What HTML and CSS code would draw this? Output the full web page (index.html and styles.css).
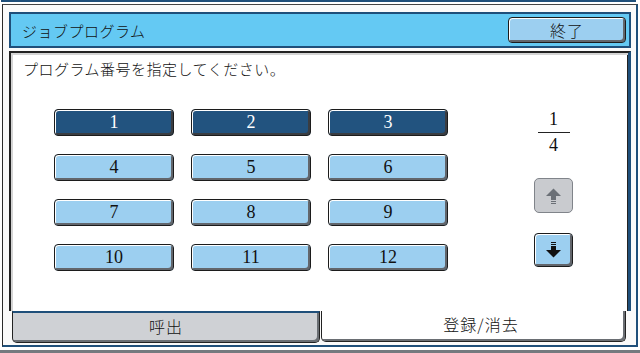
FILE: index.html
```html
<!DOCTYPE html>
<html lang="ja">
<head>
    <meta charset="UTF-8">
    <title>ジョブプログラム</title>
    <link rel="stylesheet" href="styles.css">
</head>
<body>
    <div class="topline"></div>
    <div class="frame">
        <div class="titlebar">
            <span class="title">ジョブプログラム</span>
            <button class="key exit">終了</button>
        </div>
        <div class="panel">
            <div class="panel-body">
                <p class="prompt">プログラム番号を指定してください。</p>
                <div class="picker">
                    <div class="numgrid">
                        <button class="key num sel">1</button>
                        <button class="key num sel">2</button>
                        <button class="key num sel">3</button>
                        <button class="key num">4</button>
                        <button class="key num">5</button>
                        <button class="key num">6</button>
                        <button class="key num">7</button>
                        <button class="key num">8</button>
                        <button class="key num">9</button>
                        <button class="key num">10</button>
                        <button class="key num">11</button>
                        <button class="key num">12</button>
                    </div>
                    <div class="pager">
                        <div class="frac">
                            <span>1</span>
                            <span class="bar"></span>
                            <span>4</span>
                        </div>
                        <button class="key arrow up" disabled>
                            <svg width="15" height="16" viewBox="0 0 15 16">
                                <path d="M7.5 0.5L15 8H0Z"/>
                                <rect x="5" y="8" width="5" height="4"/>
                                <rect x="5" y="13" width="5" height="1"/>
                                <rect x="5" y="15" width="5" height="1"/>
                            </svg>
                        </button>
                        <button class="key arrow down">
                            <svg width="15" height="16" viewBox="0 0 15 16">
                                <rect x="5" y="0" width="5" height="1"/>
                                <rect x="5" y="2" width="5" height="1"/>
                                <rect x="5" y="4" width="5" height="4"/>
                                <path d="M0 8H15L7.5 15.5Z"/>
                            </svg>
                        </button>
                    </div>
                </div>
            </div>
            <div class="tabs">
                <div class="tab idle">呼出</div>
                <div class="tab active">登録/消去</div>
            </div>
        </div>
    </div>
    <div class="bottombar"></div>
</body>
</html>
```

FILE: styles.css
```css
body {
    margin: 0;
    width: 640px;
    height: 353px;
    overflow: hidden;
    background-color: #fff;
    font-family: "Noto Sans CJK JP", sans-serif;
    font-weight: 300;
    color: #111;
}

.topline {
    height: 2px;
    margin: 0 4px 0 1px;
    background-color: #1f4f7a;
}

.frame {
    height: 343px;
    box-sizing: border-box;
    margin: 2px 2px 0;
    padding: 7px 5px 2px 6px;
    border-left: 1px solid #2b2b2b;
    border-top: 1px solid #444;
    border-right: 2px solid #1f4f7a;
    border-bottom: 2px solid #1f4f7a;
    background-color: #fafafa;
    display: flex;
    flex-direction: column;
    gap: 3px;
}

.titlebar {
    height: 36px;
    box-sizing: border-box;
    border: 2px solid #1f4f7a;
    background-color: #64c9f3;
    display: flex;
    align-items: center;
    justify-content: space-between;
    padding: 0 3px 0 11px;
}

.title {
    font-size: 15px;
    letter-spacing: 0.5px;
}

/* 立体ボタン */
.key {
    box-sizing: border-box;
    padding: 0;
    border: 1px solid #1c1c1c;
    border-radius: 4px;
    background-color: #9ccff0;
    box-shadow: inset 1px 1px 0 #fff, inset -2px -2px 0 #62666c;
    font-family: "Liberation Serif", serif;
    font-size: 18px;
    color: #111;
    display: flex;
    align-items: center;
    justify-content: center;
}

.exit {
    width: 118px;
    height: 26px;
    font-family: "Noto Sans CJK JP", sans-serif;
    font-weight: 300;
    font-size: 16px;
    letter-spacing: 1px;
}

.panel {
    flex: 1;
    display: flex;
    flex-direction: column;
}

.panel-body {
    flex: 1;
    border-top: 2px solid #222;
    border-left: 2px solid #222;
    border-right: 3px solid #1f4f7a;
    background-color: #fff;
    box-shadow: inset 2px 2px 0 #d4d4d4, inset -1px 0 0 #222;
    padding: 7px 0 0 12px;
}

.prompt {
    margin: 0;
    font-size: 15px;
    line-height: 18px;
    letter-spacing: 0.5px;
}

.picker {
    display: flex;
    margin: 31px 0 0 31px;
}

.numgrid {
    display: grid;
    grid-template-columns: repeat(3, 120px);
    grid-auto-rows: 27px;
    column-gap: 17px;
    row-gap: 18px;
}

.num.sel {
    background-color: #22537f;
    color: #fff;
    box-shadow: inset 1px 1px 0 #fff, inset -2px -2px 0 #3a3d42;
}

.pager {
    margin-left: 86px;
    width: 39px;
    display: flex;
    flex-direction: column;
    align-items: center;
}

.frac {
    margin-top: 1px;
    display: flex;
    flex-direction: column;
    align-items: center;
    font-family: "Liberation Serif", serif;
    font-size: 18px;
    line-height: 18px;
}

.frac .bar {
    width: 32px;
    height: 1px;
    margin: 4px 0 3px;
    background-color: #222;
}

.arrow {
    width: 39px;
    height: 35px;
}

.arrow svg {
    fill: #111;
}

.arrow.up {
    margin-top: 24px;
    border-color: #80848a;
    border-radius: 5px;
    background-color: #c9cbcf;
    box-shadow: none;
}

.arrow.up svg {
    fill: #6b7077;
}

.arrow.down {
    margin-top: 20px;
    height: 34px;
}

.tabs {
    height: 32px;
    display: flex;
}

.tab {
    box-sizing: border-box;
    display: flex;
    align-items: center;
    justify-content: center;
    font-size: 16px;
    letter-spacing: 1px;
    border: 1px solid #222;
    border-top: none;
    border-radius: 0 0 5px 5px;
    box-shadow: inset -2px -2px 0 #6a6e73;
}

.tab.idle {
    margin-left: 3px;
    width: 308px;
    border-top: 2px solid #1f4f7a;
    background-color: #cfd1d5;
    padding-bottom: 4px;
}

.tab.active {
    margin-left: 1px;
    width: 305px;
    height: 31px;
    background-color: #fff;
    padding: 0 0 4px 15px;
}

.bottombar {
    margin-top: 3px;
    height: 3px;
    background-color: #75797e;
}
```
